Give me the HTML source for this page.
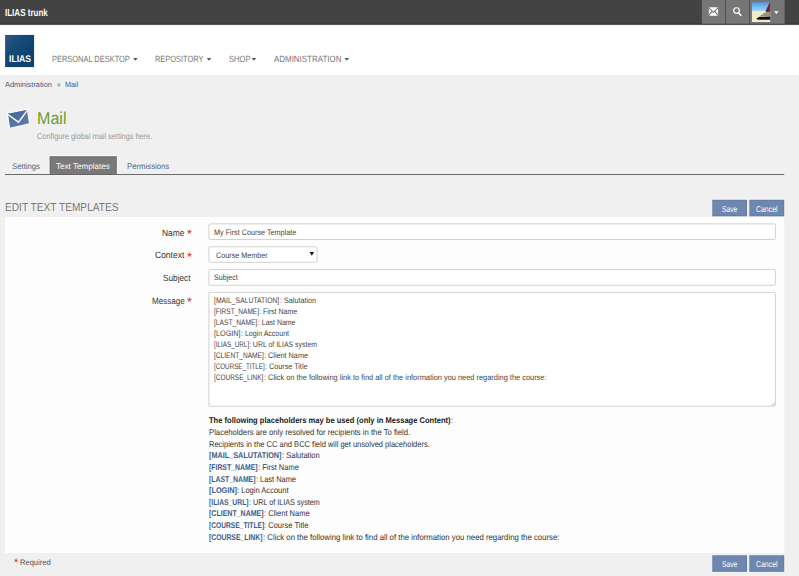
<!DOCTYPE html>
<html><head><meta charset="utf-8"><title>ILIAS - Mail</title>
<style>
*{box-sizing:border-box;margin:0;padding:0}
html,body{width:799px;height:576px;overflow:hidden;background:#f0f0f0;font-family:"Liberation Sans",sans-serif;color:#333;text-rendering:geometricPrecision}
.t{position:absolute;white-space:nowrap;transform-origin:0 0;display:block;font-weight:normal;text-decoration:none;border:0;background:none;font-family:inherit;text-rendering:inherit;letter-spacing:normal;word-spacing:normal;text-align:left;text-indent:0}
.t b{font-weight:bold}
.k b{color:#3f5a87}
.b{position:absolute}
</style></head><body>
<div class="b" style="left:0;top:0;width:799px;height:25px;background:#434343"></div>
<div class="b" style="left:0;top:25px;width:799px;height:50px;background:#fff"></div>
<svg class="b" style="left:0;top:0" width="799" height="576" viewBox="0 0 799 576">
<defs>
<linearGradient id="sky" x1="0" y1="0" x2="0" y2="1"><stop offset="0" stop-color="#4a98ea"/><stop offset="1" stop-color="#a6dcf2"/></linearGradient>
<linearGradient id="env" x1="0" y1="0" x2="1" y2="1"><stop offset="0" stop-color="#48689a"/><stop offset="1" stop-color="#5f7fae"/></linearGradient>
<linearGradient id="lg" x1="0" y1="0" x2="1" y2="1"><stop offset="0" stop-color="#2e5686"/><stop offset="0.35" stop-color="#174a78"/><stop offset="0.6" stop-color="#0f4470"/><stop offset="1" stop-color="#0e426e"/></linearGradient>
</defs>
<!-- top bar -->
<rect x="0" y="22.9" width="799" height="0.8" fill="#494949"/>
<rect x="0" y="23.7" width="799" height="1.05" fill="#2c2c2c"/>
<rect x="0" y="24.75" width="799" height="0.6" fill="#d8d8d8"/>
<rect x="701.9" y="0" width="23.1" height="23.9" fill="#767676"/>
<rect x="725.7" y="0" width="23.6" height="23.9" fill="#767676"/>
<rect x="750" y="0" width="34.6" height="23.9" fill="#767676"/>
<rect x="701.9" y="23.7" width="82.7" height="0.9" fill="#4c4c4c"/>
<!-- logo -->
<rect x="5.1" y="34.9" width="29" height="32.2" fill="url(#lg)"/>
<!-- tab -->
<rect x="48.6" y="155.2" width="69" height="19" fill="#fafafa"/>
<rect x="49.6" y="156.25" width="67.2" height="18.2" fill="#696969"/>
<rect x="50.7" y="157.3" width="65" height="17" fill="#797979"/>
<rect x="5" y="174.05" width="779.3" height="0.95" fill="#646464"/>
<!-- buttons -->
<rect x="712.3" y="199.8" width="34.7" height="16.5" fill="#627ba6"/><rect x="713.2" y="200.7" width="32.9" height="14.7" fill="#6e87af"/>
<rect x="749.3" y="199.8" width="34.9" height="16.5" fill="#627ba6"/><rect x="750.2" y="200.7" width="33.1" height="14.7" fill="#6e87af"/>
<rect x="712.3" y="555.3" width="34.7" height="16.5" fill="#627ba6"/><rect x="713.2" y="556.2" width="32.9" height="14.7" fill="#6e87af"/>
<rect x="749.3" y="555.3" width="34.9" height="16.5" fill="#627ba6"/><rect x="750.2" y="556.2" width="33.1" height="14.7" fill="#6e87af"/>
<!-- form -->
<rect x="5" y="217" width="779.3" height="336" fill="#fdfdfd"/>
<rect x="208.9" y="223.9" width="566.5" height="15.6" rx="1.1" fill="#fff" stroke="#d2d2d2"/>
<rect x="208.9" y="246.8" width="108.2" height="15.5" rx="1.4" fill="#fff" stroke="#d2d2d2"/>
<rect x="208.9" y="269.6" width="566.5" height="15.65" rx="1.1" fill="#fff" stroke="#d2d2d2"/>
<rect x="208.9" y="292.4" width="566.5" height="113.85" rx="1.1" fill="#fff" stroke="#d2d2d2"/>
<!-- top mail icon -->
<rect x="708.8" y="7.3" width="9.3" height="8.5" fill="#fff"/>
<path d="M708.6 7.6 L713.45 12.5 L718.3 7.6 M708.6 15.9 L712 11.3 M718.3 15.9 L714.9 11.3" stroke="#7b7b80" stroke-width="1.15" fill="none"/>
<!-- search icon -->
<circle cx="736.5" cy="10.6" r="2.85" fill="none" stroke="#fff" stroke-width="1.2"/>
<path d="M738.7 12.9 L741 15.5" stroke="#fff" stroke-width="1.5" stroke-linecap="round"/>
<!-- avatar -->
<rect x="752" y="2.3" width="18.2" height="9" fill="url(#sky)"/>
<rect x="752" y="11" width="18.2" height="11" fill="#f1ecc6"/>
<path d="M769.4 3 L765.8 10.5 L766 12 L770.2 13 L770.2 3Z" fill="#74281f"/>
<path d="M770.2 11.5 L765 12.6 L759 16.6 L770.2 16.6Z" fill="#8d958c"/>
<path d="M756.5 18.4 L759 17 L770.2 16.6 L770.2 19.8 L760 19.8 L757 19.6Z" fill="#0c1016"/>
<path d="M774 11.2 L778.8 11.2 L776.4 13.9Z" fill="#fff"/>
<!-- menu carets -->
<path d="M133.1 58 L137.7 58 L135.4 60.8Z M206.7 58 L211.3 58 L209.0 60.8Z M251.6 58 L256.2 58 L253.9 60.8Z M344.5 58 L349.1 58 L346.8 60.8Z" fill="#585858"/>
<!-- big mail icon -->
<path d="M7.3 113.1 L27.5 109.2 L29.6 123.9 L9.6 128.4Z" fill="url(#env)" stroke="#fafafa" stroke-width="1.2" stroke-linejoin="round"/>
<path d="M8.3 114 L26.8 110.3 L18.5 121.6Z" fill="#45649a" opacity="0.4"/>
<path d="M7.9 114.5 L18.5 122.1 L27.1 110.6" stroke="#f8f8f8" stroke-width="1.5" fill="none"/>
<!-- select arrow -->
<path d="M309.6 252 L314 252 L311.8 255.8Z" fill="#111"/>
<!-- textarea resize -->
<path d="M771.5 405.8 L774.8 402.5 M773.3 405.8 L774.8 404.3" stroke="#999" stroke-width="0.6"/>
</svg>
<div class="t" style="left:5.00px;top:9.00px;font-size:10.20px;line-height:10.20px;color:#fff;font-weight:bold;transform:scaleX(0.7867);">ILIAS trunk</div>
<div class="t" style="left:8.90px;top:55.00px;font-size:9.70px;line-height:9.70px;color:#fff;font-weight:bold;transform:scaleX(0.8924);">ILIAS</div>
<a class="t" style="left:51.90px;top:55.00px;font-size:9.10px;line-height:9.10px;color:#777;transform:scaleX(0.8193);">PERSONAL DESKTOP</a>
<a class="t" style="left:155.10px;top:55.00px;font-size:9.10px;line-height:9.10px;color:#777;transform:scaleX(0.8179);">REPOSITORY</a>
<a class="t" style="left:228.70px;top:55.00px;font-size:9.10px;line-height:9.10px;color:#777;transform:scaleX(0.8339);">SHOP</a>
<a class="t" style="left:273.60px;top:55.00px;font-size:9.10px;line-height:9.10px;color:#777;transform:scaleX(0.8737);">ADMINISTRATION</a>
<a class="t" style="left:5.00px;top:81.00px;font-size:7.50px;line-height:7.50px;color:#3f5a87;transform:scaleX(0.9867);">Administration</a>
<a class="t" style="left:56.90px;top:81.00px;font-size:7.50px;line-height:7.50px;color:#3f5a87;transform:scaleX(0.8030);">»</a>
<a class="t" style="left:64.75px;top:81.00px;font-size:7.50px;line-height:7.50px;color:#3f5a87;transform:scaleX(0.9698);">Mail</a>
<div class="t" style="left:36.64px;top:110.00px;font-size:17.20px;line-height:17.20px;color:#6e9c33;transform:scaleX(0.9353);">Mail</div>
<p class="t" style="left:36.80px;top:132.00px;font-size:8.40px;line-height:8.40px;color:#999;transform:scaleX(0.8775);">Configure global mail settings here.</p>
<a class="t" style="left:12.00px;top:163.00px;font-size:8.20px;line-height:8.20px;color:#4c6586;transform:scaleX(0.9461);">Settings</a>
<div class="t" style="left:56.25px;top:163.00px;font-size:8.20px;line-height:8.20px;color:#fff;transform:scaleX(0.9868);">Text Templates</div>
<a class="t" style="left:126.50px;top:163.00px;font-size:8.20px;line-height:8.20px;color:#4c6586;transform:scaleX(0.9474);">Permissions</a>
<h2 class="t" style="left:4.72px;top:202.00px;font-size:11.60px;line-height:11.60px;color:#7a7a7a;transform:scaleX(0.8752);">EDIT TEXT TEMPLATES</h2>
<button class="t" style="left:722.00px;top:205.00px;font-size:8.60px;line-height:8.60px;color:#fff;transform:scaleX(0.7809);">Save</button>
<button class="t" style="left:756.00px;top:205.00px;font-size:8.60px;line-height:8.60px;color:#fff;transform:scaleX(0.8070);">Cancel</button>
<button class="t" style="left:722.00px;top:560.00px;font-size:8.60px;line-height:8.60px;color:#fff;transform:scaleX(0.7809);">Save</button>
<button class="t" style="left:756.00px;top:560.00px;font-size:8.60px;line-height:8.60px;color:#fff;transform:scaleX(0.8070);">Cancel</button>
<label class="t" style="left:162.00px;top:229.00px;font-size:9.10px;line-height:9.10px;color:#333;transform:scaleX(0.9272);">Name</label>
<div class="t" style="left:186.50px;top:228.00px;font-size:12.50px;line-height:12.50px;color:#f51a1a;transform:scaleX(0.9969);">*</div>
<label class="t" style="left:155.25px;top:251.00px;font-size:9.10px;line-height:9.10px;color:#333;transform:scaleX(0.9332);">Context</label>
<div class="t" style="left:186.50px;top:251.00px;font-size:12.50px;line-height:12.50px;color:#f51a1a;transform:scaleX(0.9969);">*</div>
<div class="t" style="left:163.25px;top:274.00px;font-size:9.10px;line-height:9.10px;color:#333;transform:scaleX(0.9063);">Subject</div>
<label class="t" style="left:151.75px;top:297.00px;font-size:9.10px;line-height:9.10px;color:#333;transform:scaleX(0.8874);">Message</label>
<div class="t" style="left:186.50px;top:296.00px;font-size:12.50px;line-height:12.50px;color:#f51a1a;transform:scaleX(0.9969);">*</div>
<div class="t" style="left:213.75px;top:229.00px;font-size:8.00px;line-height:8.00px;color:#444;transform:scaleX(0.9038);">My First Course Template</div>
<div class="t" style="left:216.25px;top:252.00px;font-size:8.00px;line-height:8.00px;color:#444;transform:scaleX(0.9022);">Course Member</div>
<div class="t" style="left:213.75px;top:274.00px;font-size:8.00px;line-height:8.00px;color:#444;transform:scaleX(0.8899);">Subject</div>
<div class="t" style="left:214.25px;top:297.00px;font-size:8.00px;line-height:8.00px;color:#444;transform:scaleX(0.8517);">[MAIL_SALUTATION]</div>
<div class="t" style="left:279.50px;top:297.00px;font-size:8.00px;line-height:8.00px;color:#444;transform:scaleX(0.8993);">: Salutation</div>
<div class="t" style="left:214.25px;top:308.00px;font-size:8.00px;line-height:8.00px;color:#444;transform:scaleX(0.8163);">[FIRST_NAME]</div>
<div class="t" style="left:259.25px;top:308.00px;font-size:8.00px;line-height:8.00px;color:#444;transform:scaleX(0.8780);">: First Name</div>
<div class="t" style="left:214.25px;top:319.00px;font-size:8.00px;line-height:8.00px;color:#444;transform:scaleX(0.8315);">[LAST_NAME]</div>
<div class="t" style="left:257.50px;top:319.00px;font-size:8.00px;line-height:8.00px;color:#444;transform:scaleX(0.8693);">: Last Name</div>
<div class="t" style="left:214.25px;top:330.00px;font-size:8.00px;line-height:8.00px;color:#444;transform:scaleX(0.9031);">[LOGIN]</div>
<div class="t" style="left:240.75px;top:330.00px;font-size:8.00px;line-height:8.00px;color:#444;transform:scaleX(0.8772);">: Login Account</div>
<div class="t" style="left:214.25px;top:341.00px;font-size:8.00px;line-height:8.00px;color:#444;transform:scaleX(0.7904);">[ILIAS_URL]</div>
<div class="t" style="left:249.40px;top:341.00px;font-size:8.00px;line-height:8.00px;color:#444;transform:scaleX(0.8686);">: URL of ILIAS system</div>
<div class="t" style="left:214.25px;top:352.00px;font-size:8.00px;line-height:8.00px;color:#444;transform:scaleX(0.8227);">[CLIENT_NAME]</div>
<div class="t" style="left:264.00px;top:352.00px;font-size:8.00px;line-height:8.00px;color:#444;transform:scaleX(0.9078);">: Client Name</div>
<div class="t" style="left:214.25px;top:363.00px;font-size:8.00px;line-height:8.00px;color:#444;transform:scaleX(0.7819);">[COURSE_TITLE]</div>
<div class="t" style="left:265.00px;top:363.00px;font-size:8.00px;line-height:8.00px;color:#444;transform:scaleX(0.9016);">: Course Title</div>
<div class="t" style="left:214.25px;top:374.00px;font-size:8.00px;line-height:8.00px;color:#444;transform:scaleX(0.8086);">[COURSE_LINK]</div>
<div class="t" style="left:263.50px;top:374.00px;font-size:8.00px;line-height:8.00px;color:#444;transform:scaleX(0.9260);">: Click on the following link to find all of the information you need regarding the course:</div>
<div class="t" style="left:208.75px;top:416.00px;font-size:8.30px;line-height:8.30px;color:#333;transform:scaleX(0.9115);"><b style="color:#222">The following placeholders may be used (only in Message Content)</b>:</div>
<div class="t" style="left:208.75px;top:428.00px;font-size:8.30px;line-height:8.30px;color:#333;transform:scaleX(0.9291);">Placeholders are only resolved for recipients in the To field.</div>
<div class="t" style="left:208.75px;top:440.00px;font-size:8.30px;line-height:8.30px;color:#333;transform:scaleX(0.9048);">Recipients in the CC and BCC field will get unsolved placeholders.</div>
<div class="t" style="left:208.75px;top:451.00px;font-size:8.30px;line-height:8.30px;color:#3a5a8b;font-weight:bold;transform:scaleX(0.8771);">[MAIL_SALUTATION]</div>
<div class="t" style="left:281.65px;top:451.00px;font-size:8.30px;line-height:8.30px;color:#333;transform:scaleX(0.9093);">: Salutation</div>
<div class="t" style="left:208.75px;top:463.00px;font-size:8.30px;line-height:8.30px;color:#3a5a8b;font-weight:bold;transform:scaleX(0.8293);">[FIRST_NAME]</div>
<div class="t" style="left:257.70px;top:463.00px;font-size:8.30px;line-height:8.30px;color:#333;transform:scaleX(0.9051);">: First Name</div>
<div class="t" style="left:208.75px;top:475.00px;font-size:8.30px;line-height:8.30px;color:#3a5a8b;font-weight:bold;transform:scaleX(0.8260);">[LAST_NAME]</div>
<div class="t" style="left:255.60px;top:475.00px;font-size:8.30px;line-height:8.30px;color:#333;transform:scaleX(0.8942);">: Last Name</div>
<div class="t" style="left:208.75px;top:486.00px;font-size:8.30px;line-height:8.30px;color:#3a5a8b;font-weight:bold;transform:scaleX(0.8817);">[LOGIN]</div>
<div class="t" style="left:237.20px;top:486.00px;font-size:8.30px;line-height:8.30px;color:#333;transform:scaleX(0.9093);">: Login Account</div>
<div class="t" style="left:208.75px;top:498.00px;font-size:8.30px;line-height:8.30px;color:#3a5a8b;font-weight:bold;transform:scaleX(0.8170);">[ILIAS_URL]</div>
<div class="t" style="left:248.70px;top:498.00px;font-size:8.30px;line-height:8.30px;color:#333;transform:scaleX(0.8707);">: URL of ILIAS system</div>
<div class="t" style="left:208.75px;top:509.00px;font-size:8.30px;line-height:8.30px;color:#3a5a8b;font-weight:bold;transform:scaleX(0.8469);">[CLIENT_NAME]</div>
<div class="t" style="left:263.80px;top:509.00px;font-size:8.30px;line-height:8.30px;color:#333;transform:scaleX(0.9092);">: Client Name</div>
<div class="t" style="left:208.75px;top:521.00px;font-size:8.30px;line-height:8.30px;color:#3a5a8b;font-weight:bold;transform:scaleX(0.8029);">[COURSE_TITLE]</div>
<div class="t" style="left:264.30px;top:521.00px;font-size:8.30px;line-height:8.30px;color:#333;transform:scaleX(0.9081);">: Course Title</div>
<div class="t" style="left:208.75px;top:533.00px;font-size:8.30px;line-height:8.30px;color:#3a5a8b;font-weight:bold;transform:scaleX(0.8223);">[COURSE_LINK]</div>
<div class="t" style="left:262.60px;top:533.00px;font-size:8.30px;line-height:8.30px;color:#333;transform:scaleX(0.9368);">: Click on the following link to find all of the information you need regarding the course:</div>
<div class="t" style="left:13.50px;top:558.00px;font-size:11.00px;line-height:11.00px;color:#f51a1a;transform:scaleX(0.9997);">*</div>
<div class="t" style="left:19.75px;top:559.00px;font-size:7.90px;line-height:7.90px;color:#555;transform:scaleX(0.9569);">Required</div>
</body></html>
